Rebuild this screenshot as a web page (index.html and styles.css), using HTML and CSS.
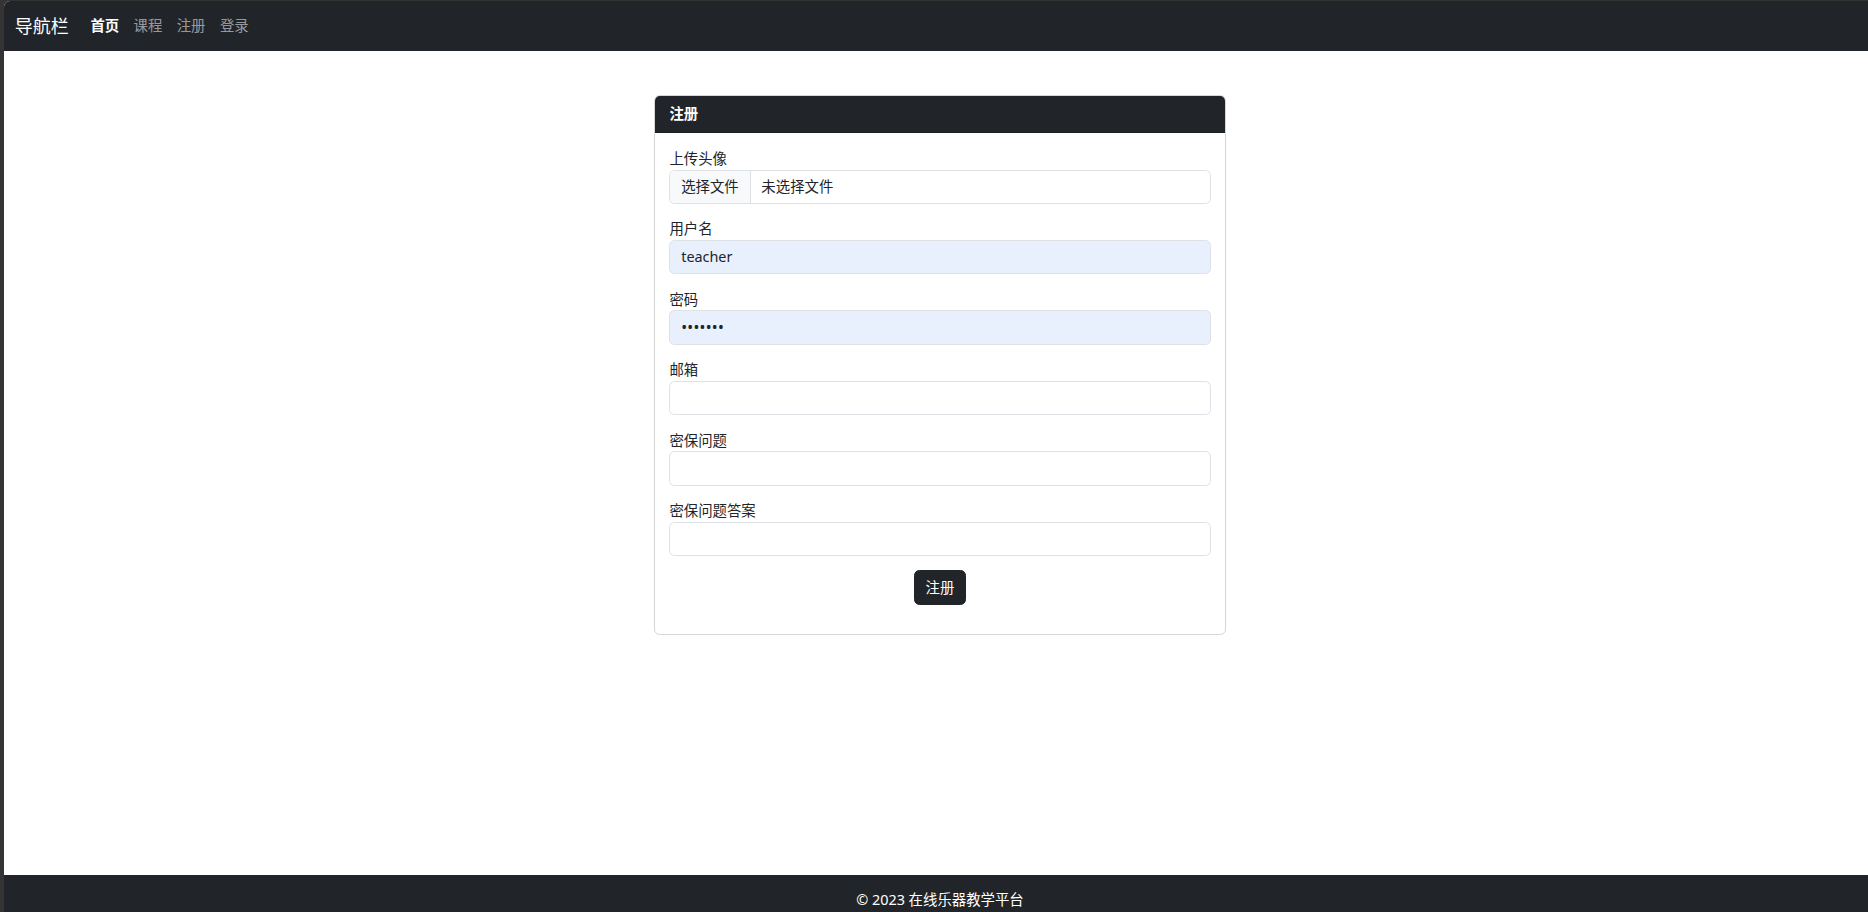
FILE: index.html
```html
<!DOCTYPE html>
<html lang="zh-CN">
<head>
<meta charset="utf-8">
<title>注册</title>
<link rel="stylesheet" href="styles.css">
</head>
<body>
<div class="page">
  <nav class="navbar">
    <a class="brand" href="#">导航栏</a>
    <ul class="nav">
      <li><a class="nav-link active" href="#">首页</a></li>
      <li><a class="nav-link" href="#">课程</a></li>
      <li><a class="nav-link" href="#">注册</a></li>
      <li><a class="nav-link" href="#">登录</a></li>
    </ul>
  </nav>
  <main class="main">
    <div class="card">
      <div class="card-header">注册</div>
      <div class="card-body">
        <div class="group">
          <label class="label">上传头像</label>
          <div class="control file">
            <span class="file-btn">选择文件</span>
            <span class="file-name">未选择文件</span>
          </div>
        </div>
        <div class="group">
          <label class="label">用户名</label>
          <div class="control autofill">teacher</div>
        </div>
        <div class="group">
          <label class="label">密码</label>
          <div class="control autofill"><span class="dots">•••••••</span></div>
        </div>
        <div class="group">
          <label class="label">邮箱</label>
          <div class="control"></div>
        </div>
        <div class="group">
          <label class="label">密保问题</label>
          <div class="control"></div>
        </div>
        <div class="group">
          <label class="label">密保问题答案</label>
          <div class="control"></div>
        </div>
        <div class="actions">
          <button class="btn" type="button">注册</button>
        </div>
      </div>
    </div>
  </main>
  <footer class="footer">© 2023 在线乐器教学平台</footer>
</div>
</body>
</html>
```
FILE: styles.css
```css
* {
  box-sizing: border-box;
}

html, body {
  margin: 0;
  height: 912px;
  overflow: hidden;
}

body {
  background: #343434;
  padding: 1px 0 0 4px;
  display: flex;
  font-family: "Noto Sans", "Noto Sans CJK SC", sans-serif;
  font-size: 14.4px;
  line-height: 1.5;
  color: #212529;
}

.page {
  flex: none;
  width: 1872px;
  height: 924px;
  background: #fff;
  border-top-left-radius: 6px;
  overflow: hidden;
  display: flex;
  flex-direction: column;
}

.navbar {
  height: 50px;
  background: #212529;
  display: flex;
  align-items: center;
  padding: 0 10.8px;
  flex: none;
}

.brand {
  color: #fff;
  text-decoration: none;
  font-size: 18px;
  line-height: 1.5;
  margin-right: 14.4px;
}

.nav {
  list-style: none;
  margin: 0;
  padding: 0;
  display: flex;
}

.nav-link {
  display: block;
  padding: 7.2px 7.2px;
  color: rgba(255, 255, 255, 0.55);
  text-decoration: none;
}

.nav-link.active {
  color: #fff;
  font-weight: 600;
}

.main {
  flex: 1;
  display: flex;
  justify-content: center;
  align-items: flex-start;
  padding-top: 44px;
}

.card {
  width: 572px;
  border: 1px solid #d6d6d6;
  border-radius: 5.7px;
  overflow: hidden;
}

.card-header {
  background: #212529;
  color: #fff;
  padding: 7.2px 14.4px;
  border-bottom: 1px solid rgba(0, 0, 0, 0.175);
  font-weight: 600;
}

.card-body {
  padding: 15px 14.4px 14.4px;
}

.group {
  margin-bottom: 14.4px;
}

.label {
  display: block;
}

.control {
  height: 34.4px;
  border: 1px solid #dee2e6;
  border-radius: 5.4px;
  padding: 0 10.8px;
  display: flex;
  align-items: center;
  background: #fff;
  color: #212529;
}

.control.autofill {
  background: #e8f0fe;
}

.control.file {
  padding: 0;
  overflow: hidden;
}

.file-btn {
  height: 100%;
  display: flex;
  align-items: center;
  padding: 0 10.8px;
  background: #f8f9fa;
  border-right: 1px solid #dee2e6;
}

.file-name {
  padding-left: 10.8px;
}

.dots {
  font-size: 15.5px;
  letter-spacing: 0.3px;
}

.actions {
  display: flex;
  justify-content: center;
  margin-bottom: 14.4px;
}

.btn {
  font: inherit;
  height: 34.4px;
  background: #212529;
  color: #fff;
  border: 1px solid #212529;
  border-radius: 5.4px;
  padding: 0 10.8px;
  cursor: pointer;
}

.footer {
  flex: none;
  height: 50.4px;
  background: #212529;
  color: #fff;
  text-align: center;
  padding: 14.4px 0;
}
```
